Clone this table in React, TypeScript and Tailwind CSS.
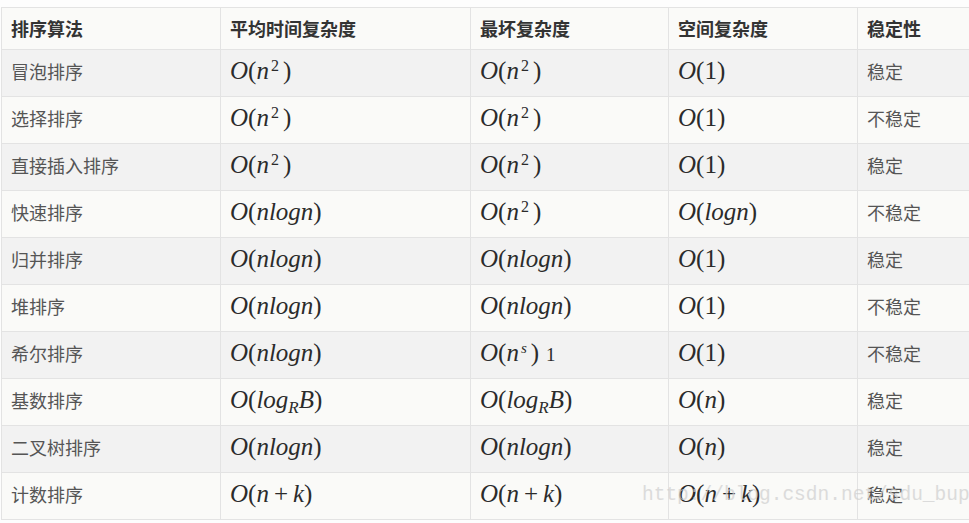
import React from "react";

type Cell = React.ReactNode;

const I: React.FC<{ children: React.ReactNode }> = ({ children }) => <i className="italic">{children}</i>;

const Math: React.FC<{ children: React.ReactNode }> = ({ children }) => (
    <span className="font-['Liberation_Serif',serif] text-[25px] leading-none text-[#2b2b2b] not-italic whitespace-nowrap">{children}</span>
);

const On2 = () => (
    <Math>
        <I>O</I>(<I>n</I>
        <sup className="text-[16px] top-[-8px] ml-[2px] mr-[4px]">2</sup>)
    </Math>
);
const One = () => (
    <Math>
        <I>O</I>(1)
    </Math>
);
const N = () => (
    <Math>
        <I>O</I>(<I>n</I>)
    </Math>
);
const NLogN = () => (
    <Math>
        <I>O</I>(<I>nlogn</I>)
    </Math>
);
const LogN = () => (
    <Math>
        <I>O</I>(<I>logn</I>)
    </Math>
);
const LogRB = () => (
    <Math>
        <I>O</I>(<I>log</I>
        <sub className="text-[17px] italic bottom-[-5px]">R</sub>
        <I>B</I>)
    </Math>
);
const NK = () => (
    <Math>
        <I>O</I>(<I>n</I>
        <span className="mx-[5px]">+</span>
        <I>k</I>)
    </Math>
);
const Ns = () => (
    <Math>
        <I>O</I>(<I>n</I>
        <sup className="text-[15px] italic top-[-8px] ml-[2px] mr-[4px]">s</sup>)
        <span className="text-[19px] ml-[7px]">1</span>
    </Math>
);

const rows: Cell[][] = [
    ["冒泡排序", <On2 />, <On2 />, <One />, "稳定"],
    ["选择排序", <On2 />, <On2 />, <One />, "不稳定"],
    ["直接插入排序", <On2 />, <On2 />, <One />, "稳定"],
    ["快速排序", <NLogN />, <On2 />, <LogN />, "不稳定"],
    ["归并排序", <NLogN />, <NLogN />, <One />, "稳定"],
    ["堆排序", <NLogN />, <NLogN />, <One />, "不稳定"],
    ["希尔排序", <NLogN />, <Ns />, <One />, "不稳定"],
    ["基数排序", <LogRB />, <LogRB />, <N />, "稳定"],
    ["二叉树排序", <NLogN />, <NLogN />, <N />, "稳定"],
    ["计数排序", <NK />, <NK />, <NK />, "稳定"],
];

const headers = ["排序算法", "平均时间复杂度", "最坏复杂度", "空间复杂度", "稳定性"];
const widths = ["w-[219px]", "w-[250px]", "w-[198px]", "w-[189px]", "w-[160px]"];

export default function App() {
    return (
        <div className="relative w-[969px] h-[523px] overflow-hidden bg-[#fdfdfd] pt-[7px] pl-[1px] font-['Noto_Sans_CJK_SC','Noto_Sans',sans-serif]">
            <table className="table-fixed border-collapse w-[1016px] border border-[#e3e3e3] rounded-[3px]">
                <thead>
                    <tr className="h-[42px] bg-[#fafaf8]">
                        {headers.map((h, i) => (
                            <th
                                key={h}
                                className={`${widths[i]} border border-[#e3e3e3] pl-[9px] pr-[10px] text-left align-middle text-[18px] font-bold text-[#333]`}
                            >
                                {h}
                            </th>
                        ))}
                    </tr>
                </thead>
                <tbody>
                    {rows.map((r, ri) => (
                        <tr key={ri} className={`h-[47px] ${ri % 2 === 0 ? "bg-[#f2f2f2]" : "bg-[#fafaf8]"}`}>
                            {r.map((c, ci) => (
                                <td
                                    key={ci}
                                    className="border border-[#e3e3e3] pl-[9px] pr-[10px] pb-[3px] align-middle text-[18px] text-[#555]"
                                >
                                    {c}
                                </td>
                            ))}
                        </tr>
                    ))}
                </tbody>
            </table>
            <div className="absolute left-[642px] top-[481px] font-['Liberation_Mono',monospace] text-[19.5px] text-[#cfcfcf] opacity-70 pointer-events-none whitespace-nowrap">
                http://blog.csdn.net/sdu_bup
            </div>
        </div>
    );
}
